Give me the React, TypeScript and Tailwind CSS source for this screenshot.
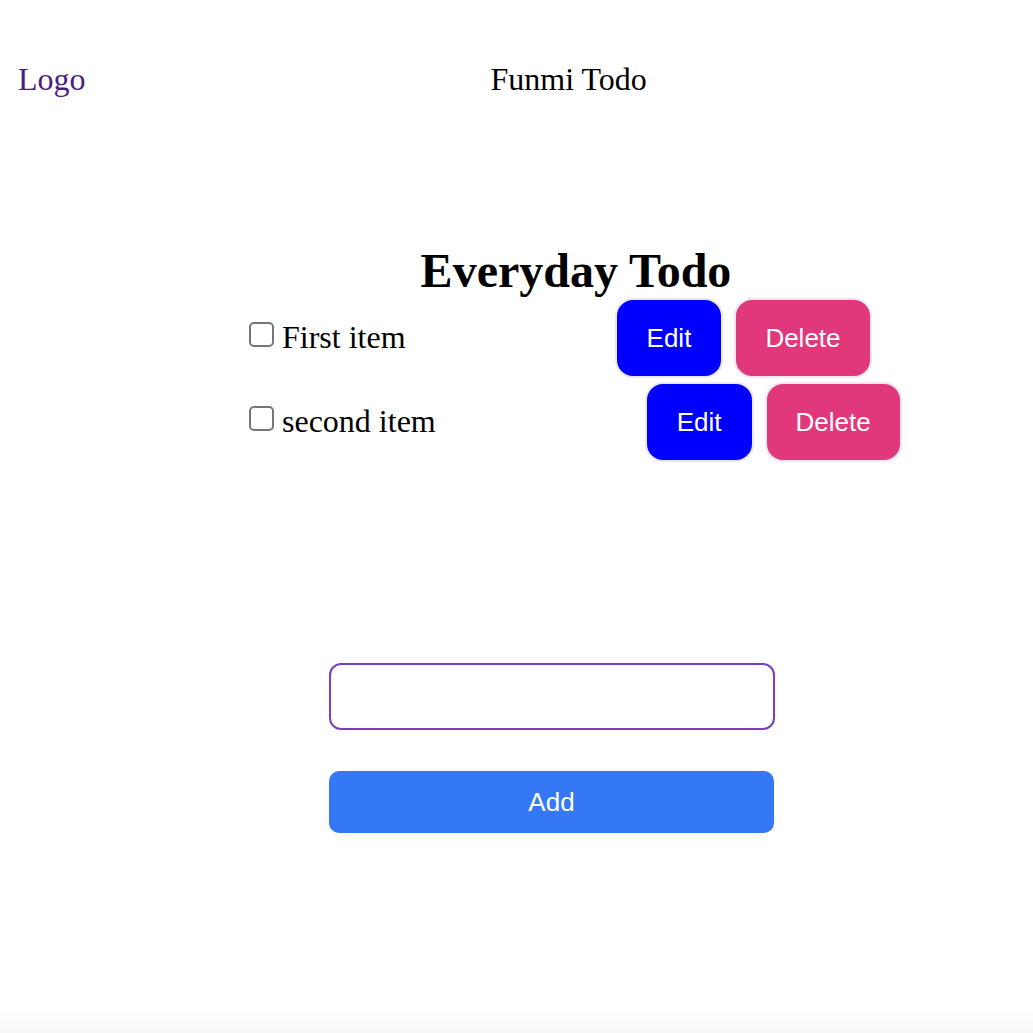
import { useState } from 'react';

type Todo = {
    id: number;
    title: string;
    done: boolean;
};

const serif = { fontFamily: '"Liberation Serif", "Times New Roman", serif' };

export default function App() {
    const [todos, setTodos] = useState<Todo[]>([
        { id: 1, title: 'First item', done: false },
        { id: 2, title: 'second item', done: false },
    ]);
    const [text, setText] = useState('');

    const addTodo = () => {
        if (!text.trim()) return;
        setTodos([...todos, { id: Date.now(), title: text.trim(), done: false }]);
        setText('');
    };

    return (
        <div className="flex min-h-[1033px] flex-col bg-white font-['Liberation_Serif',serif] text-black">
            {/* Header */}
            <header className="flex pt-[61px] pl-[18px] text-[32px] leading-[36px]">
                <span className="text-[#4a2083]">Logo</span>
                <span className="ml-[405px]">Funmi Todo</span>
            </header>

            {/* Todo list */}
            <section className="mt-[146px] ml-[249px] w-[654px]">
                <h1 className="text-center text-[48px] leading-[55px] font-bold">Everyday Todo</h1>
                <ul className="flex flex-col gap-[4px]">
                    {todos.map((todo) => (
                        <li key={todo.id} className="flex h-[80px] items-center whitespace-nowrap">
                            <input
                                type="checkbox"
                                checked={todo.done}
                                onChange={() => setTodos(todos.map((t) => (t.id === todo.id ? { ...t, done: !t.done } : t)))}
                                className="mb-[8px] h-[25px] w-[25px] shrink-0 appearance-none rounded-[5px] border-2 border-[#767676] bg-white"
                            />
                            <span className="mb-[3px] ml-[8px] shrink-0 text-[32px] leading-[36px]" style={serif}>
                                {todo.title}
                            </span>
                            <div className="ml-[209px] flex shrink-0 gap-[11px] font-['Liberation_Sans',Arial,sans-serif] text-[26px] text-white">
                                <button className="h-[80px] shrink-0 rounded-[18px] border-2 border-[#ece6f2] bg-[#0000ff] px-[30px]">Edit</button>
                                <button
                                    onClick={() => setTodos(todos.filter((t) => t.id !== todo.id))}
                                    className="h-[80px] shrink-0 rounded-[18px] border-2 border-[#f3e6ee] bg-[#e0387a] px-[29px]"
                                >
                                    Delete
                                </button>
                            </div>
                        </li>
                    ))}
                </ul>
            </section>

            {/* Add form */}
            <section className="mt-[201px] ml-[329px] flex w-[446px] flex-col gap-[41px]">
                <input
                    value={text}
                    onChange={(e) => setText(e.target.value)}
                    className="h-[67px] w-full rounded-[12px] border-2 border-[#7b3fbd] bg-white px-3 text-[24px] outline-none"
                />
                <button
                    onClick={addTodo}
                    className="h-[62px] w-[445px] rounded-[10px] bg-[#3478f6] font-['Liberation_Sans',Arial,sans-serif] text-[26px] text-white"
                >
                    Add
                </button>
            </section>

            <div className="flex-1" />
            <div className="h-[23px] bg-gradient-to-b from-white to-[#f8f8f8]" />
        </div>
    );
}
